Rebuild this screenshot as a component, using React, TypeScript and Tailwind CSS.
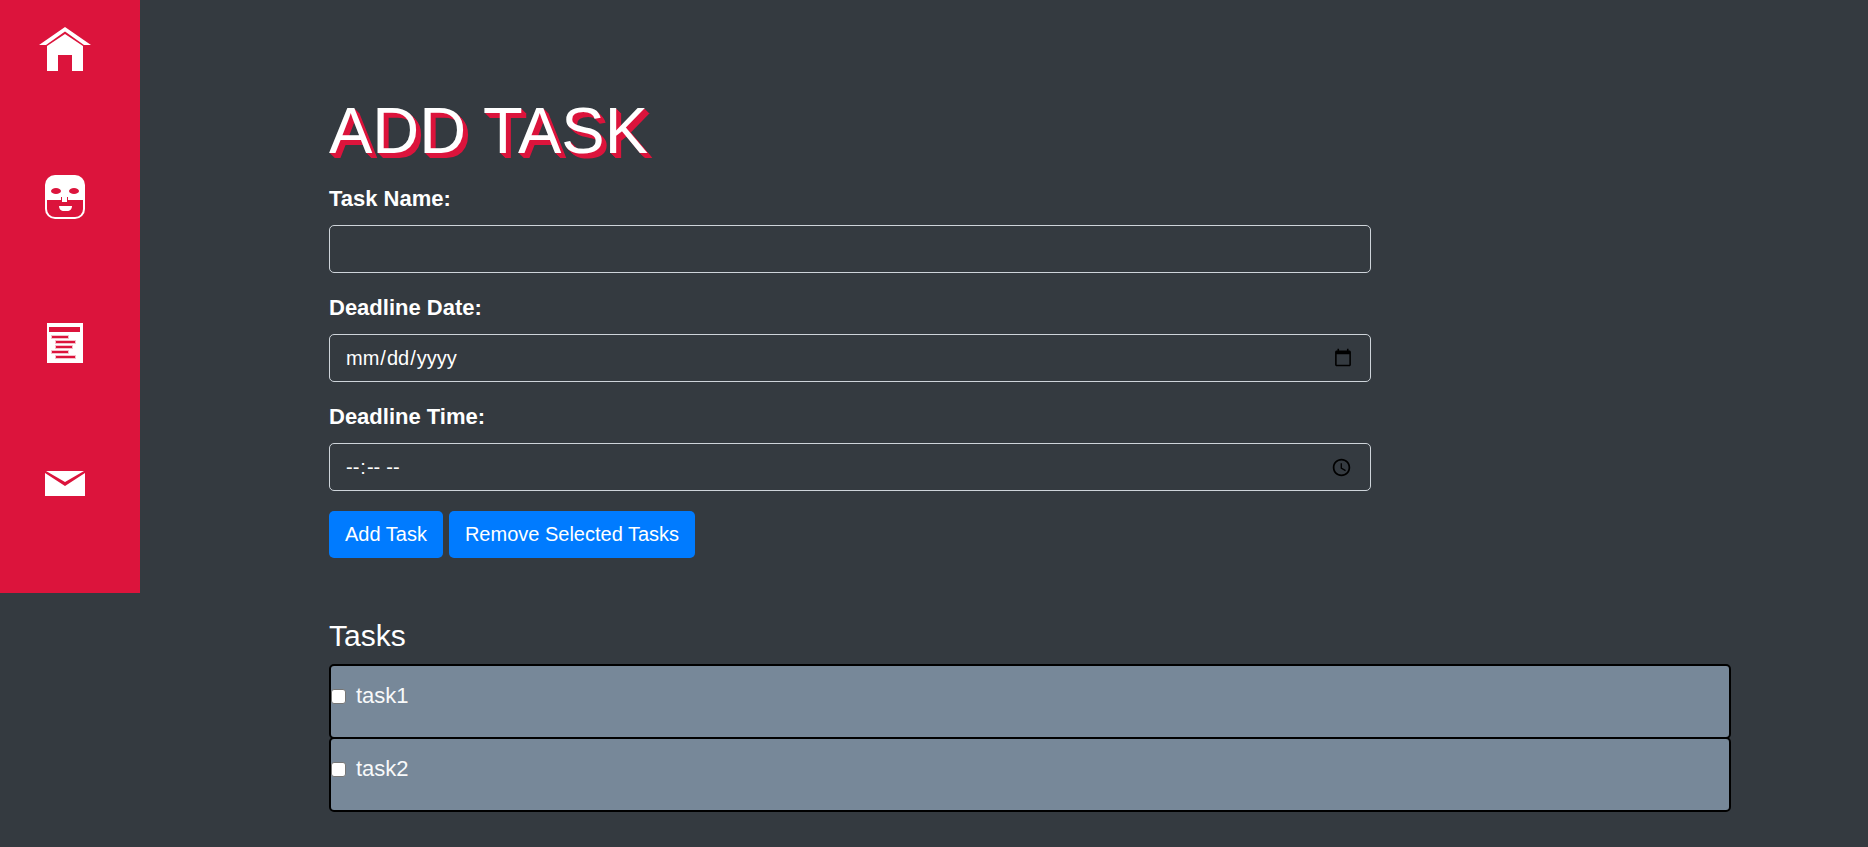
import React from "react";

const INPUT =
  "block h-12 w-full rounded-[5px] border border-[#ced4da] bg-transparent px-[15px] text-[20px] leading-[30px] text-white outline-none";
const LABEL = "mb-2 block text-[22px] leading-9 font-bold";
const BUTTON =
  "h-[47px] cursor-pointer rounded-[5px] bg-[#007bff] px-4 pb-0.5 text-[20px] leading-[30px] text-white";

function HomeIcon() {
  return (
    <svg width="52" height="44" viewBox="0 0 52 44" fill="#fff" aria-hidden="true">
      <path d="M26 0 52 18H45L26 4.5 7 18H0Z" />
      <path d="M26 7 44 19V44H33V28H19V44H8V19Z" />
    </svg>
  );
}

function FaceIcon() {
  return (
    <svg width="40" height="44" viewBox="0 0 40 44" aria-hidden="true">
      <rect width="40" height="44" rx="10" fill="#fff" />
      <path d="M2 25H38V34a8 8 0 0 1-8 8H10a8 8 0 0 1-8-8Z" fill="#dc143c" />
      <ellipse cx="11" cy="16" rx="5" ry="3" fill="#dc143c" />
      <ellipse cx="29" cy="16" rx="5" ry="3" fill="#dc143c" />
      <path d="M16 22H23V27H16Z" fill="#dc143c" />
      <path d="M17 22H22V27H17Z" fill="#fff" />
      <path d="M14 31H27C27 34 25 36 22 36H19C16 36 14 34 14 31Z" fill="#fff" />
    </svg>
  );
}

function ListIcon() {
  return (
    <svg width="36" height="40" viewBox="0 0 36 40" aria-hidden="true">
      <rect width="36" height="40" fill="#fff" />
      <path d="M2 4H33V9H2Z" fill="#dc143c" />
      <path
        d="M4 12H22V16H4ZM8 17H29V21H8ZM8 22H26V26H8ZM4 27H22V31H4ZM8 32H29V36H8Z"
        fill="#f5c0cb"
      />
      <path
        d="M5 13H21V15H5ZM9 18H28V20H9ZM9 23H25V25H9ZM5 28H21V30H5ZM9 33H28V35H9Z"
        fill="#dc143c"
      />
    </svg>
  );
}

function MailIcon() {
  return (
    <svg width="40" height="25" viewBox="0 0 40 25" aria-hidden="true">
      <rect width="40" height="25" fill="#fff" />
      <path d="M0 0H1L20 11 39 0H40V2L20 15 0 2Z" fill="#dc143c" />
    </svg>
  );
}

const links = [
  { name: "Home", icon: <HomeIcon /> },
  { name: "About", icon: <FaceIcon /> },
  { name: "Tasks", icon: <ListIcon /> },
  { name: "Contact", icon: <MailIcon /> },
];

export default function App() {
  return (
    <div className="flex min-h-screen items-start bg-[#343a40] font-['Liberation_Sans',Arial,sans-serif] text-white">
      <nav className="flex w-[140px] shrink-0 flex-col items-center bg-[#dc143c] pr-[10px] pb-px">
        {links.map((link) => (
          <a key={link.name} href="#" aria-label={link.name} className="block h-[148px] pt-[27px]">
            {link.icon}
          </a>
        ))}
      </nav>
      <div className="min-w-0 flex-1 pt-[91px] pr-[137px] pb-8 pl-[189px]">
        <form className="w-[74.35%]" onSubmit={(e) => e.preventDefault()}>
          <h1 className="mb-[10px] text-[65px] leading-[80px] [text-shadow:1px_1px_#dc143c,2px_2px_#dc143c,3px_3px_#dc143c,4px_4px_#dc143c,5px_5px_#dc143c]">
            ADD TASK
          </h1>
          <div className="mb-[17px]">
            <label htmlFor="name" className={LABEL}>
              Task Name:
            </label>
            <input id="name" type="text" className={INPUT} />
          </div>
          <div className="mb-[17px]">
            <label htmlFor="date" className={LABEL}>
              Deadline Date:
            </label>
            <input id="date" type="date" className={INPUT} />
          </div>
          <div className="mb-5">
            <label htmlFor="time" className={LABEL}>
              Deadline Time:
            </label>
            <input id="time" type="time" className={INPUT} />
          </div>
          <div className="flex gap-[6px]">
            <button type="submit" className={BUTTON}>
              Add Task
            </button>
            <button type="button" className={BUTTON}>
              Remove Selected Tasks
            </button>
          </div>
        </form>
        <h2 className="mt-[60px] mb-[10px] text-[30px] leading-9">Tasks</h2>
        <ul>
          {["task1", "task2"].map((task) => (
            <li
              key={task}
              className="-mb-[2px] h-[75px] rounded-[5px] border-2 border-black bg-[#778899] pt-3"
            >
              <label className="flex items-center gap-[10px] text-[22px] leading-9 text-[#f8f9fa]">
                <input
                  type="checkbox"
                  className="size-[15px] appearance-none rounded-[3px] border border-[#767676] bg-white checked:bg-[#007bff]"
                />
                {task}
              </label>
            </li>
          ))}
        </ul>
      </div>
    </div>
  );
}
